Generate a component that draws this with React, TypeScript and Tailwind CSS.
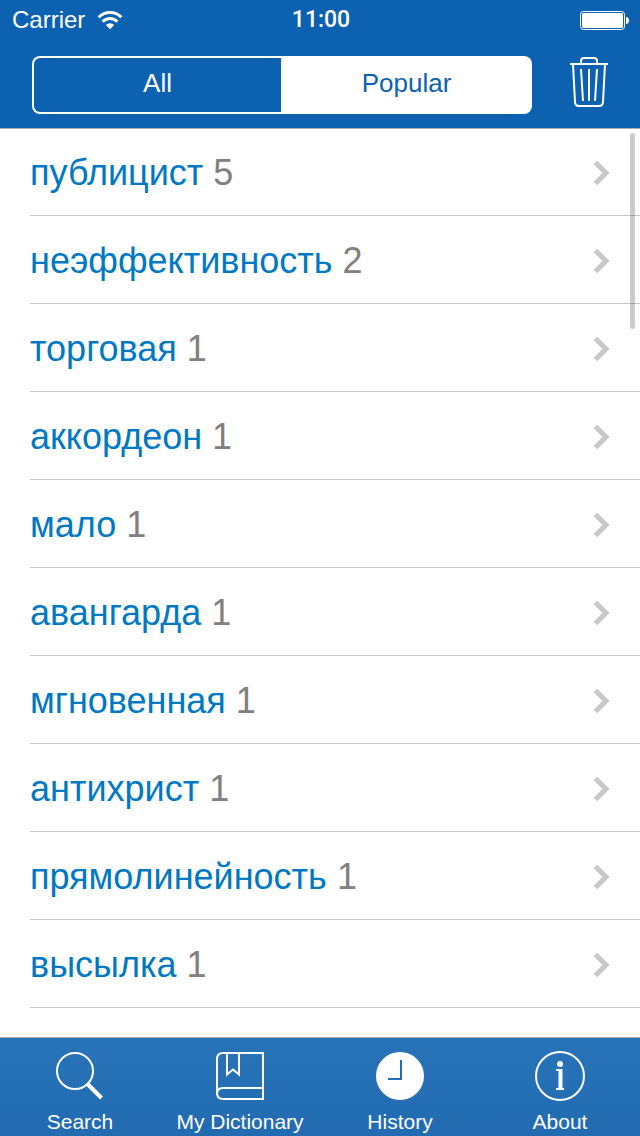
import React, { useState } from 'react';

interface Word {
  text: string;
  count: number;
}

const WORDS: Word[] = [
  { text: 'публицист', count: 5 },
  { text: 'неэффективность', count: 2 },
  { text: 'торговая', count: 1 },
  { text: 'аккордеон', count: 1 },
  { text: 'мало', count: 1 },
  { text: 'авангарда', count: 1 },
  { text: 'мгновенная', count: 1 },
  { text: 'антихрист', count: 1 },
  { text: 'прямолинейность', count: 1 },
  { text: 'высылка', count: 1 },
];

const WifiIcon = () => (
  <svg width="26" height="20" viewBox="0 0 26 20" fill="none" stroke="white" strokeWidth="3" aria-hidden="true">
    <path d="M1.6 7.2a16 16 0 0 1 22.8 0" />
    <path d="M5.6 11.6a10.4 10.4 0 0 1 14.8 0" />
    <path d="M13 19.2l-4.2-4.2a6 6 0 0 1 8.4 0z" fill="white" stroke="none" />
  </svg>
);

const BatteryIcon = () => (
  <svg width="50" height="20" viewBox="0 0 50 20" fill="none" aria-hidden="true">
    <rect x="0.5" y="1.5" width="44" height="18" rx="3" stroke="white" />
    <rect x="2" y="3" width="41" height="15" rx="1.5" fill="white" />
    <path d="M46 7c2 0 3 1.500 3 3.500s-1 3.500-3 3.500z" fill="white" />
  </svg>
);

const TrashIcon = () => (
  <svg width="38" height="52" viewBox="0 0 38 52" fill="none" stroke="white" strokeWidth="2" aria-hidden="true">
    <path d="M0 8h38" />
    <path d="M11 8V5q0-3 3-3h10q3 0 3 3v3" />
    <path d="M3 8l2 38q0.200 4 4 4h20q3.800 0 4-4l2-38" />
    <path d="M11 13l2 32M19 13v32M27 13l-2 32" />
  </svg>
);

const ChevronIcon = () => (
  <svg width="17" height="26" viewBox="0 0 17 26" fill="none" stroke="#c7c7cc" strokeWidth="5" aria-hidden="true">
    <path d="M2.500 2.500l10.500 10.500L2.500 23.500" />
  </svg>
);

const SearchIcon = () => (
  <svg width="50" height="50" viewBox="0 0 50 50" fill="none" stroke="white" aria-hidden="true">
    <circle cx="20" cy="20" r="18" strokeWidth="2" />
    <path d="M32 32.500L46.500 47" strokeWidth="4" />
  </svg>
);

const BookIcon = () => (
  <svg width="50" height="50" viewBox="0 0 50 50" fill="none" stroke="white" strokeWidth="2" aria-hidden="true">
    <path d="M48 2H8q-6 0-6 6v34q0 6 6 6h40z" />
    <path d="M2 43q0-6 6-6h40" />
    <path d="M12 2v21.500l6-5 6 5V2" />
  </svg>
);

const HistoryIcon = () => (
  <svg width="50" height="50" viewBox="0 0 50 50" fill="none" aria-hidden="true">
    <circle cx="25" cy="25" r="24" fill="white" />
    <path d="M26 9v19H13" stroke="#246eb3" strokeWidth="2" />
  </svg>
);

const AboutIcon = () => (
  <svg width="50" height="50" viewBox="0 0 50 50" fill="none" stroke="white" aria-hidden="true">
    <circle cx="25" cy="25" r="24" strokeWidth="2" />
    <circle cx="25" cy="13" r="3" fill="white" stroke="none" />
    <path d="M21 19h6M21 38h8" strokeWidth="2" />
    <path d="M25.500 18v20" strokeWidth="4" />
  </svg>
);

const TABS = [
  { label: 'Search', Icon: SearchIcon },
  { label: 'My Dictionary', Icon: BookIcon },
  { label: 'History', Icon: HistoryIcon },
  { label: 'About', Icon: AboutIcon },
];

const FILTERS = ['All', 'Popular'];

const App: React.FC = () => {
  const [filter, setFilter] = useState('Popular');

  return (
    <div className="flex h-screen flex-col bg-white font-['Liberation_Sans',Arial,sans-serif]">
      <header className="z-10 bg-[#0c61b1] pb-3.5 text-white shadow-[0_1px_0_#a9abae]">
        {/* Status bar */}
        <div className="grid h-10 grid-cols-3 items-center pr-2.5 pl-3">
          <div className="flex items-center gap-3 text-2xl">
            <span>Carrier</span>
            <WifiIcon />
          </div>
          <span className="text-center font-['Roboto',sans-serif] text-[23px] font-medium">11:00</span>
          <div className="flex justify-end">
            <BatteryIcon />
          </div>
        </div>

        <div className="flex items-start gap-[38px] px-8 pt-4">
          <div className="flex h-[58px] flex-1 gap-0.5 rounded-lg bg-white p-0.5">
            {FILTERS.map((name) => (
              <button
                key={name}
                onClick={() => setFilter(name)}
                aria-pressed={filter === name}
                className={`flex-1 pb-1 text-[26px] first:rounded-l-md last:rounded-r-md ${
                  filter === name ? 'bg-white text-[#0c61b1]' : 'bg-[#0c61b1] text-white'
                }`}
              >
                {name}
              </button>
            ))}
          </div>
          <button aria-label="Clear history">
            <TrashIcon />
          </button>
        </div>
      </header>

      <main className="relative flex-1 overflow-hidden">
        <ul>
          {WORDS.map((word) => (
            <li key={word.text} className="pl-[30px]">
              <a
                href="#"
                className="flex h-22 items-center justify-between border-b border-[#c8c7cc] pt-0.5 pr-[30px] text-[36px]"
              >
                <span className="text-[#0079c2]">
                  {word.text} <span className="text-[#808080]">{word.count}</span>
                </span>
                <ChevronIcon />
              </a>
            </li>
          ))}
        </ul>
        {/* Scroll indicator */}
        <div className="absolute top-[5px] right-[5px] h-[196px] w-[5px] rounded-full bg-black/20" />
      </main>

      <nav className="grid grid-cols-4 border-t border-[#a9abae] bg-linear-to-b from-[#2873b8] to-[#226bb0] pt-[13px] text-white">
        {TABS.map(({ label, Icon }) => (
          <a key={label} href="#" className="flex flex-col items-center gap-[7px] text-[21px] leading-7">
            <Icon />
            <span>{label}</span>
          </a>
        ))}
      </nav>
    </div>
  );
};

export default App;
